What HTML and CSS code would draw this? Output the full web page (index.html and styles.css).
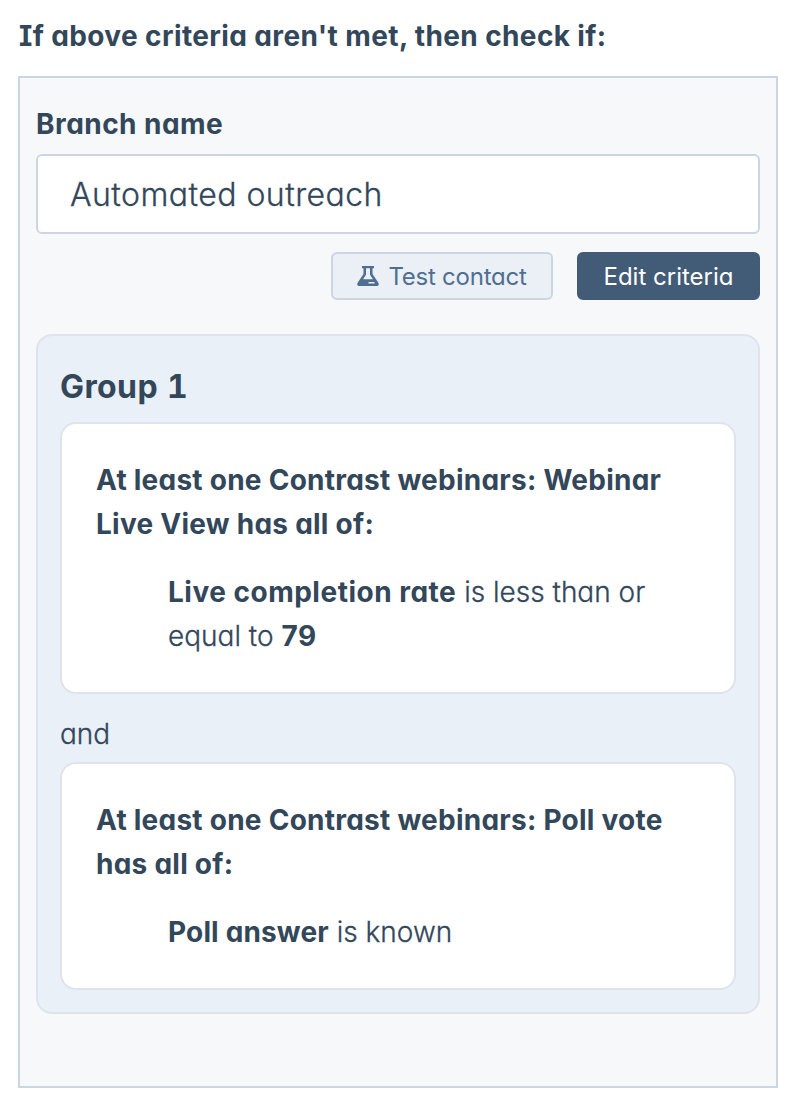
FILE: index.html
```html
<!DOCTYPE html>
<html lang="en">
<head>
    <meta charset="UTF-8">
    <meta name="viewport" content="width=device-width, initial-scale=1.0">
    <title>Branch criteria</title>
    <link rel="stylesheet" href="styles.css">
</head>
<body>
    <h1>If above criteria aren't met, then check if:</h1>

    <main class="branch">
        <label class="branch-label" for="branchName">Branch name</label>
        <input class="branch-input" type="text" id="branchName" value="Automated outreach">

        <div class="actions">
            <button class="btn btn-test">
                <svg class="flask" viewBox="0 0 22 20" width="22" height="20">
                    <path fill="currentColor" fill-rule="evenodd" d="M5 0h12v2.200H15.500v5.800l5.700 8.500C22.500 18.500 21.500 20 19.500 20h-17C.5 20-.5 18.500.8 16.500L6.500 8V2.200H5zM9 2.200v6.500L6 13.200h10L13 8.700V2.200zM11.500 16v1.500h6V16z"/>
                </svg>
                <span>Test contact</span>
            </button>
            <button class="btn btn-edit">Edit criteria</button>
        </div>

        <section class="group">
            <h2>Group 1</h2>
            <div class="card">
                <p class="card-title">At least one Contrast webinars: Webinar<br>Live View has all of:</p>
                <p class="rule"><b>Live completion rate</b> is less than or<br>equal to <b>79</b></p>
            </div>
            <p class="operator">and</p>
            <div class="card">
                <p class="card-title">At least one Contrast webinars: Poll vote<br>has all of:</p>
                <p class="rule"><b class="short">Poll answer</b> is known</p>
            </div>
        </section>
    </main>
</body>
</html>
```
FILE: styles.css
```css
* {
    box-sizing: border-box;
}

body {
    margin: 0;
    padding: 14px 16px 22px 18px;
    background-color: #fff;
    color: #33475b;
    font-family: Inter, "Open Sans", sans-serif;
    font-feature-settings: "cv11";
    font-size: 28px;
    font-weight: 300;
    line-height: 44px;
}

h1, h2, p {
    margin: 0;
}

h1 {
    height: 62px;
    padding-left: 1px;
    font-size: 28px;
    font-weight: 700;
    font-feature-settings: "cv11", "cv08";
    letter-spacing: 0.38px;
}

.branch {
    height: 1012px;
    padding: 24px 16px 0;
    background-color: #f6f8fa;
    border: 2px solid #cbd6e2;
}

.branch-label {
    display: block;
    height: 52px;
    font-weight: 700;
    letter-spacing: 0.45px;
}

.branch-input {
    display: block;
    width: 100%;
    height: 80px;
    padding: 1px 32px 0;
    border: 2px solid #cbd6e2;
    border-radius: 6px;
    background-color: #fff;
    color: #33475b;
    font: inherit;
    font-feature-settings: "cv11";
    font-size: 32px;
    letter-spacing: 0.45px;
    -webkit-text-stroke: 0.3px;
}

.actions {
    display: flex;
    justify-content: flex-end;
    gap: 24px;
    margin: 18px 0 34px;
}

.btn {
    display: flex;
    align-items: center;
    justify-content: center;
    height: 48px;
    padding: 2px 0 0;
    border: 2px solid #cbd6e2;
    border-radius: 6px;
    font: inherit;
    font-feature-settings: "cv11";
    font-size: 24px;
    font-weight: 400;
}

.btn-test {
    width: 222px;
    gap: 9px;
    background-color: #eaf0f6;
    color: #506e91;
    letter-spacing: -0.25px;
}

.flask {
    margin-bottom: 2px;
}

.btn-edit {
    width: 183px;
    border-color: #425b76;
    background-color: #425b76;
    color: #fff;
}

.group {
    padding: 29px 22px 22px;
    background-color: #eaf0f7;
    border: 2px solid #dfe3eb;
    border-radius: 16px;
}

h2 {
    height: 57px;
    font-size: 32px;
    font-weight: 700;
    font-feature-settings: "cv11", "tnum";
    letter-spacing: 0.4px;
}

.card {
    padding: 34px;
    background-color: #fff;
    border: 2px solid #dfe3eb;
    border-radius: 16px;
}

.card-title {
    font-weight: 700;
    letter-spacing: 0.25px;
}

.rule {
    margin-top: 24px;
    padding-left: 72px;
    -webkit-text-stroke: 0.3px;
}

.rule b {
    font-weight: 700;
    letter-spacing: 0.5px;
    -webkit-text-stroke: 0;
}

.rule .short {
    letter-spacing: 0.15px;
}

.operator {
    height: 68px;
    padding-top: 18px;
    -webkit-text-stroke: 0.3px;
}
```
